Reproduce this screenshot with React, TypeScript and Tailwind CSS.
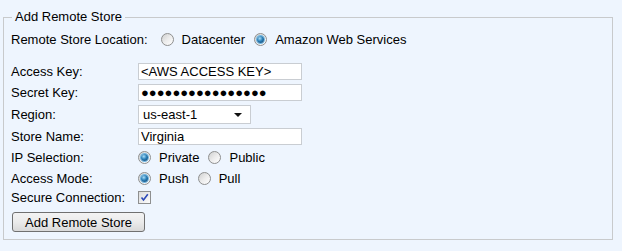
const Radio = ({ checked }: { checked?: boolean }) => (
  <span className="flex h-[13px] w-[13px] shrink-0 items-center justify-center rounded-full border border-[#8e8f8f] bg-gradient-to-br from-[#cfd0d0] via-[#ececec] to-[#ffffff]">
    {checked && (
      <span className="h-[7px] w-[7px] rounded-full bg-[radial-gradient(circle_at_40%_35%,#a9def8_0%,#2a7fb8_45%,#0b3a63_100%)] shadow-[0_0_0_1px_#6fb5e0]" />
    )}
  </span>
);

const RadioOption = ({
  label,
  checked,
  className = "",
}: {
  label: string;
  checked?: boolean;
  className?: string;
}) => (
  <span className={`flex items-center ${className}`}>
    <Radio checked={checked} />
    <span className="ml-[8px]">{label}</span>
  </span>
);

const Checkbox = () => (
  <span className="flex h-[13px] w-[13px] items-center justify-center border border-[#8e8f8f] bg-gradient-to-br from-[#dcdcdc] to-[#fcfcfc]">
    <svg width="9" height="9" viewBox="0 0 9 9">
      <path d="M1.5 4.5 L3.5 7 L7.8 1.2" fill="none" stroke="#2b48b8" strokeWidth="1.6" />
    </svg>
  </span>
);

const Row = ({
  label,
  h = "h-[21px]",
  children,
}: {
  label: string;
  h?: string;
  children: React.ReactNode;
}) => (
  <div className={`flex items-center ${h}`}>
    <span className="w-[127px] shrink-0">{label}</span>
    {children}
  </div>
);

export default function App() {
  const input =
    "h-[17px] w-[164px] border border-[#c9cdd2] bg-white px-[2px] text-[13px] text-black outline-none";

  return (
    <div
      className="h-[251px] w-full bg-[#eef5fe] pt-[9px] pl-[3px] pr-[9px] text-[13px] leading-[15px] text-black"
      style={{ fontFamily: '"Liberation Sans", Arial, sans-serif' }}
    >
      <fieldset className="border border-[#c8cacc] px-[7px] pb-[7px] pt-[4px]">
        <legend className="ml-[1px] px-[3px] leading-[16px]">Add Remote Store</legend>

        <div className="flex h-[20px] items-center">
          <span>Remote Store Location:</span>
          <RadioOption label="Datacenter" className="ml-[13px]" />
          <RadioOption label="Amazon Web Services" checked className="ml-[9px]" />
        </div>

        <div className="mt-[12px]">
          <Row label="Access Key:">
            <input className={input} defaultValue="<AWS ACCESS KEY>" />
          </Row>
          <Row label="Secret Key:">
            <input className={input} defaultValue={"●".repeat(16)} />
          </Row>
          <Row label="Region:" h="h-[23px]">
            <div className="flex h-[19px] w-[113px] items-center justify-between border border-[#c9cdd2] bg-white pl-[4px] pr-[8px]">
              <span>us-east-1</span>
              <svg width="8" height="4" viewBox="0 0 8 4">
                <path d="M0 0 H8 L4 4 Z" fill="#111" />
              </svg>
            </div>
          </Row>
          <Row label="Store Name:">
            <input className={input} defaultValue="Virginia" />
          </Row>
          <Row label="IP Selection:">
            <RadioOption label="Private" checked />
            <RadioOption label="Public" className="ml-[9px]" />
          </Row>
          <Row label="Access Mode:" h="h-[20px]">
            <RadioOption label="Push" checked />
            <RadioOption label="Pull" className="ml-[9px]" />
          </Row>
          <Row label="Secure Connection:" h="h-[19px]">
            <Checkbox />
          </Row>
        </div>

        <button className="ml-[1px] mt-[5px] flex h-[20px] w-[133px] items-center justify-center rounded-[3px] border border-[#707070] bg-gradient-to-b from-[#f3f3f3] via-[#ebebeb] to-[#d9d9d9] text-[13px]">
          Add Remote Store
        </button>
      </fieldset>
    </div>
  );
}
